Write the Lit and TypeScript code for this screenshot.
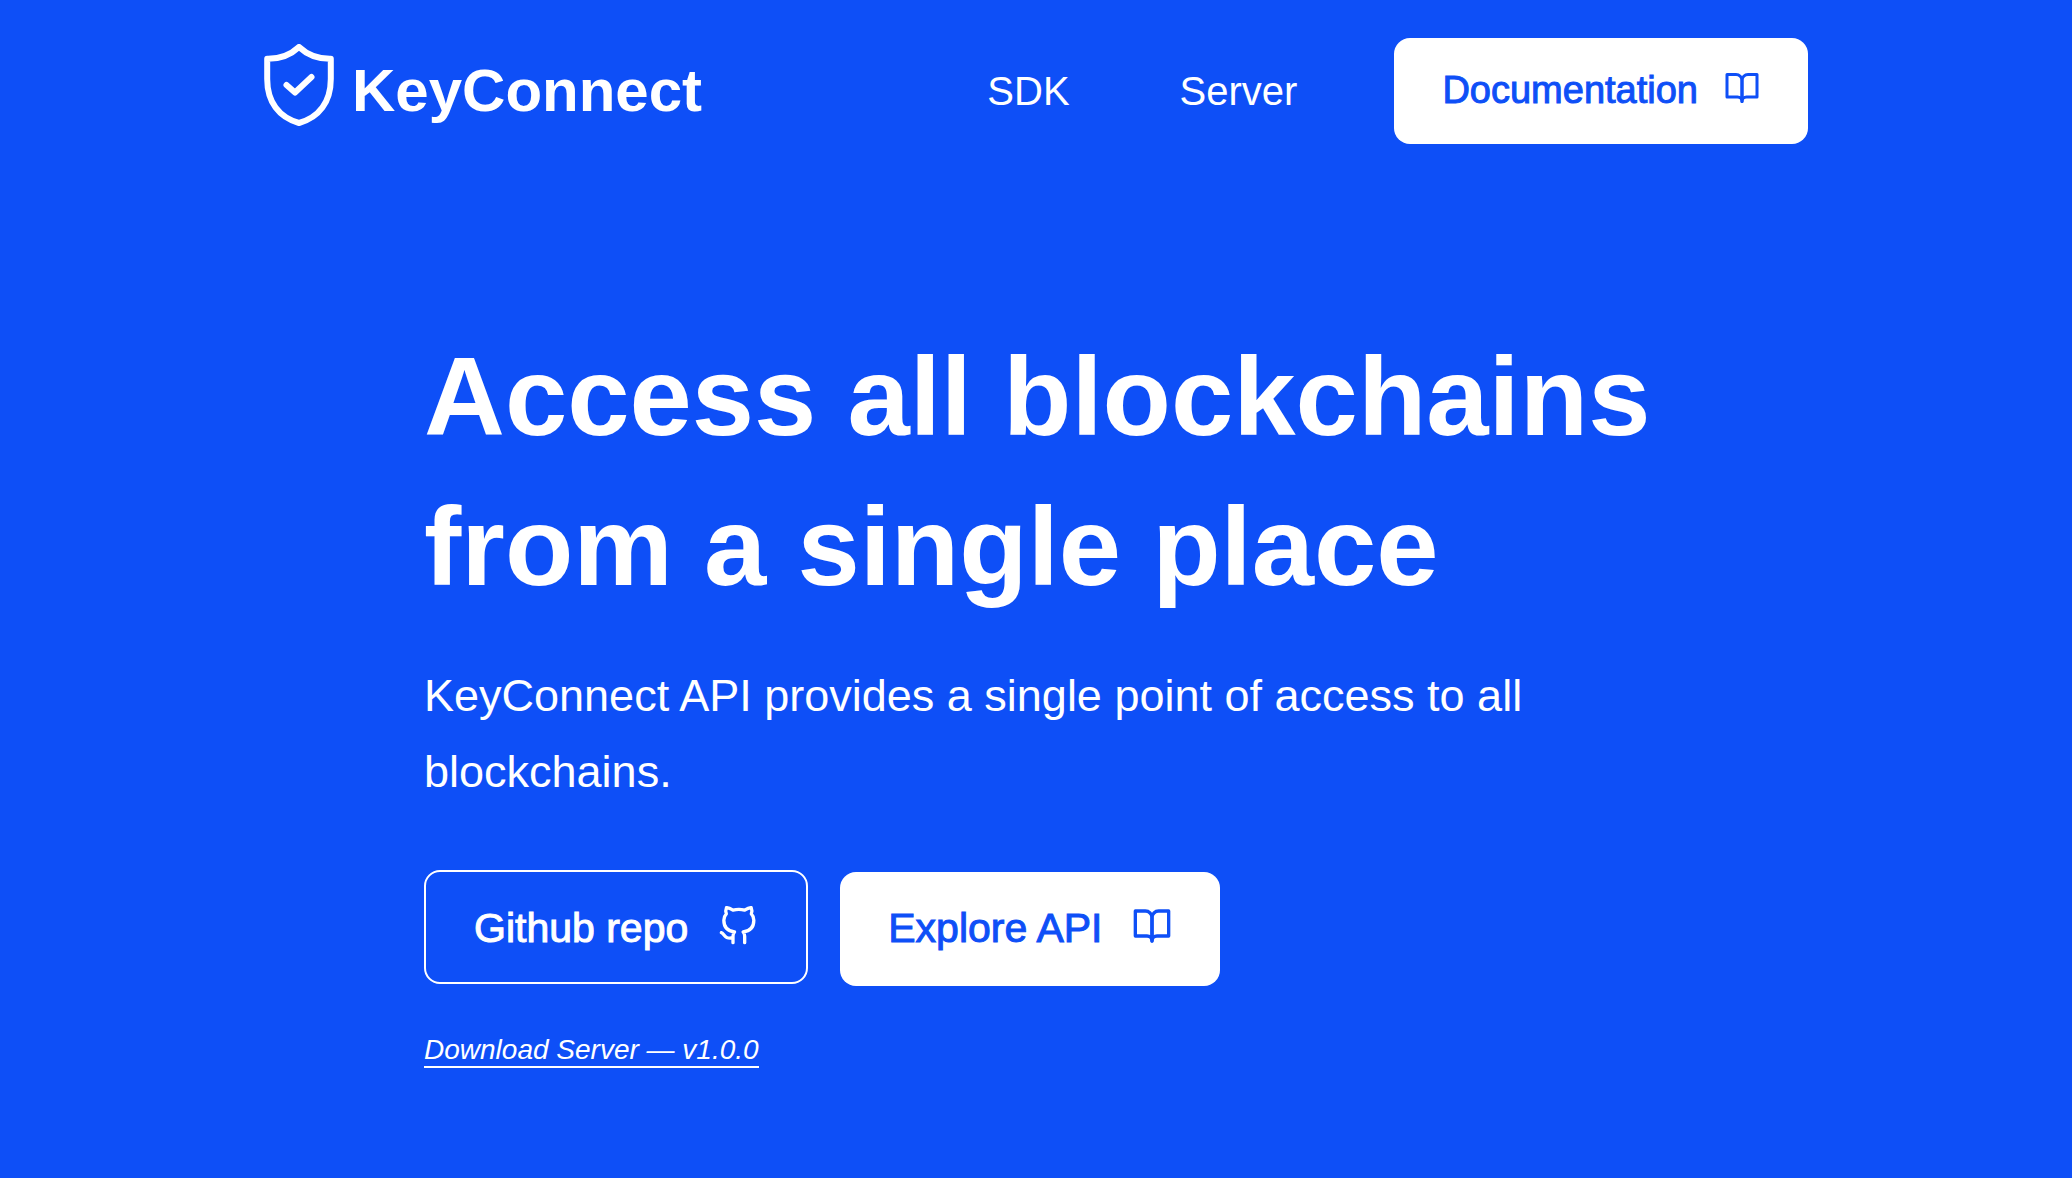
import { LitElement, html, css, svg } from "lit";
import { customElement, property } from "lit/decorators.js";

const glyphs = {
  book: svg`<path d="M2 3h6a4 4 0 0 1 4 4v14a3 3 0 0 0-3-3H2z" /><path d="M22 3h-6a4 4 0 0 0-4 4v14a3 3 0 0 1 3-3h7z" />`,
  github: svg`<path d="M9 19c-5 1.5-5-2.5-7-3m14 6v-3.87a3.37 3.37 0 0 0-.94-2.61c3.14-.35 6.44-1.54 6.44-7A5.44 5.44 0 0 0 20 4.77 5.07 5.07 0 0 0 19.91 1S18.73.65 16 2.48a13.38 13.38 0 0 0-7 0C6.27.65 5.09 1 5.09 1A5.07 5.07 0 0 0 5 4.77a5.44 5.44 0 0 0-1.5 3.78c0 5.42 3.3 6.61 6.44 7A3.37 3.37 0 0 0 9 18.13V22" />`,
};

@customElement("line-icon")
export class LineIcon extends LitElement {
  @property() name: keyof typeof glyphs = "book";

  static styles = css`
    :host {
      display: block;
      flex: none;
    }
    .icon {
      display: block;
      width: 100%;
      height: 100%;
      overflow: visible;
      fill: none;
      stroke: currentColor;
      stroke-width: 2;
      stroke-linecap: round;
      stroke-linejoin: round;
    }
  `;

  render() {
    return html`<svg class="icon" viewBox="0 0 24 24" aria-hidden="true">${glyphs[this.name]}</svg>`;
  }
}

@customElement("app-root")
export class AppRoot extends LitElement {
  static styles = css`
    :host {
      --blue: #0e4ff7;
      display: block;
      box-sizing: border-box;
      min-height: 100vh;
      padding: 38px 48px;
      background: var(--blue);
      color: #fff;
      font-family: "Liberation Sans", Arial, sans-serif;
    }
    a {
      color: inherit;
      text-decoration: none;
    }
    .page {
      max-width: 1544px;
      margin: 0 auto;
    }
    .header {
      display: flex;
      align-items: center;
      justify-content: space-between;
    }
    .logo {
      display: flex;
      align-items: center;
      gap: 18px;
      font-size: 60px;
      line-height: 68px;
      font-weight: 700;
    }
    .shield {
      display: block;
      width: 70px;
      height: 82px;
      padding-bottom: 12px;
      fill: none;
      stroke: currentColor;
      stroke-linecap: round;
      stroke-linejoin: round;
    }
    .nav {
      display: flex;
      align-items: center;
      font-size: 40px;
      line-height: 44px;
    }
    .link {
      margin-right: 110px;
    }
    .link.last {
      margin-right: 97px;
    }
    .button {
      display: flex;
      align-items: flex-start;
      gap: 30px;
      padding: 34px 48px 36px;
      border-radius: 16px;
      background: #fff;
      color: var(--blue);
      font-size: 41px;
      line-height: 44px;
      -webkit-text-stroke: 1px currentColor;
    }
    .button line-icon {
      width: 40px;
      height: 40px;
    }
    .button.small {
      gap: 26px;
      padding: 32px 48px 34px;
      font-size: 38px;
      line-height: 40px;
    }
    .button.small line-icon {
      width: 36px;
      height: 36px;
    }
    .button.outline {
      padding-bottom: 32px;
      border: 2px solid #fff;
      background: none;
      color: #fff;
    }
    .hero {
      margin-top: 178px;
      padding-left: 160px;
    }
    .title {
      margin: 0;
      max-width: 1280px;
      font-size: 112px;
      line-height: 150px;
      font-weight: 700;
    }
    .lead {
      margin: 36px 0 0;
      max-width: 1160px;
      font-size: 45px;
      line-height: 76px;
    }
    .actions {
      display: flex;
      align-items: baseline;
      gap: 32px;
      margin-top: 60px;
    }
    .download {
      display: inline-block;
      margin-top: 48px;
      border-bottom: 2px solid #fff;
      font-size: 28px;
      line-height: 32px;
      font-style: italic;
    }
  `;

  render() {
    return html`
      <div class="page">
        <header class="header">
          <a class="logo" href="#">
            <svg class="shield" viewBox="0 0 70 82" aria-hidden="true">
              <path
                stroke-width="6"
                d="M35 3C26.500 11 15.500 15 3.200 14.800V35C3.200 58 15 73.500 35 79C55 73.500 66.800 58 66.800 35V14.800C54.500 15 43.500 11 35 3Z"
              />
              <path stroke-width="6" d="M22.500 41L31 48.500L47.500 33" />
            </svg>
            <span>KeyConnect</span>
          </a>
          <nav class="nav">
            <a class="link" href="#sdk">SDK</a>
            <a class="link last" href="#server">Server</a>
            <a class="button small" href="#docs">Documentation<line-icon name="book"></line-icon></a>
          </nav>
        </header>
        <main class="hero">
          <h1 class="title">Access all blockchains from a single place</h1>
          <p class="lead">KeyConnect API provides a single point of access to all blockchains.</p>
          <div class="actions">
            <a class="button outline" href="#github">Github repo<line-icon name="github"></line-icon></a>
            <a class="button" href="#api">Explore API<line-icon name="book"></line-icon></a>
          </div>
          <a class="download" href="#download">Download Server — v1.0.0</a>
        </main>
      </div>
    `;
  }
}
